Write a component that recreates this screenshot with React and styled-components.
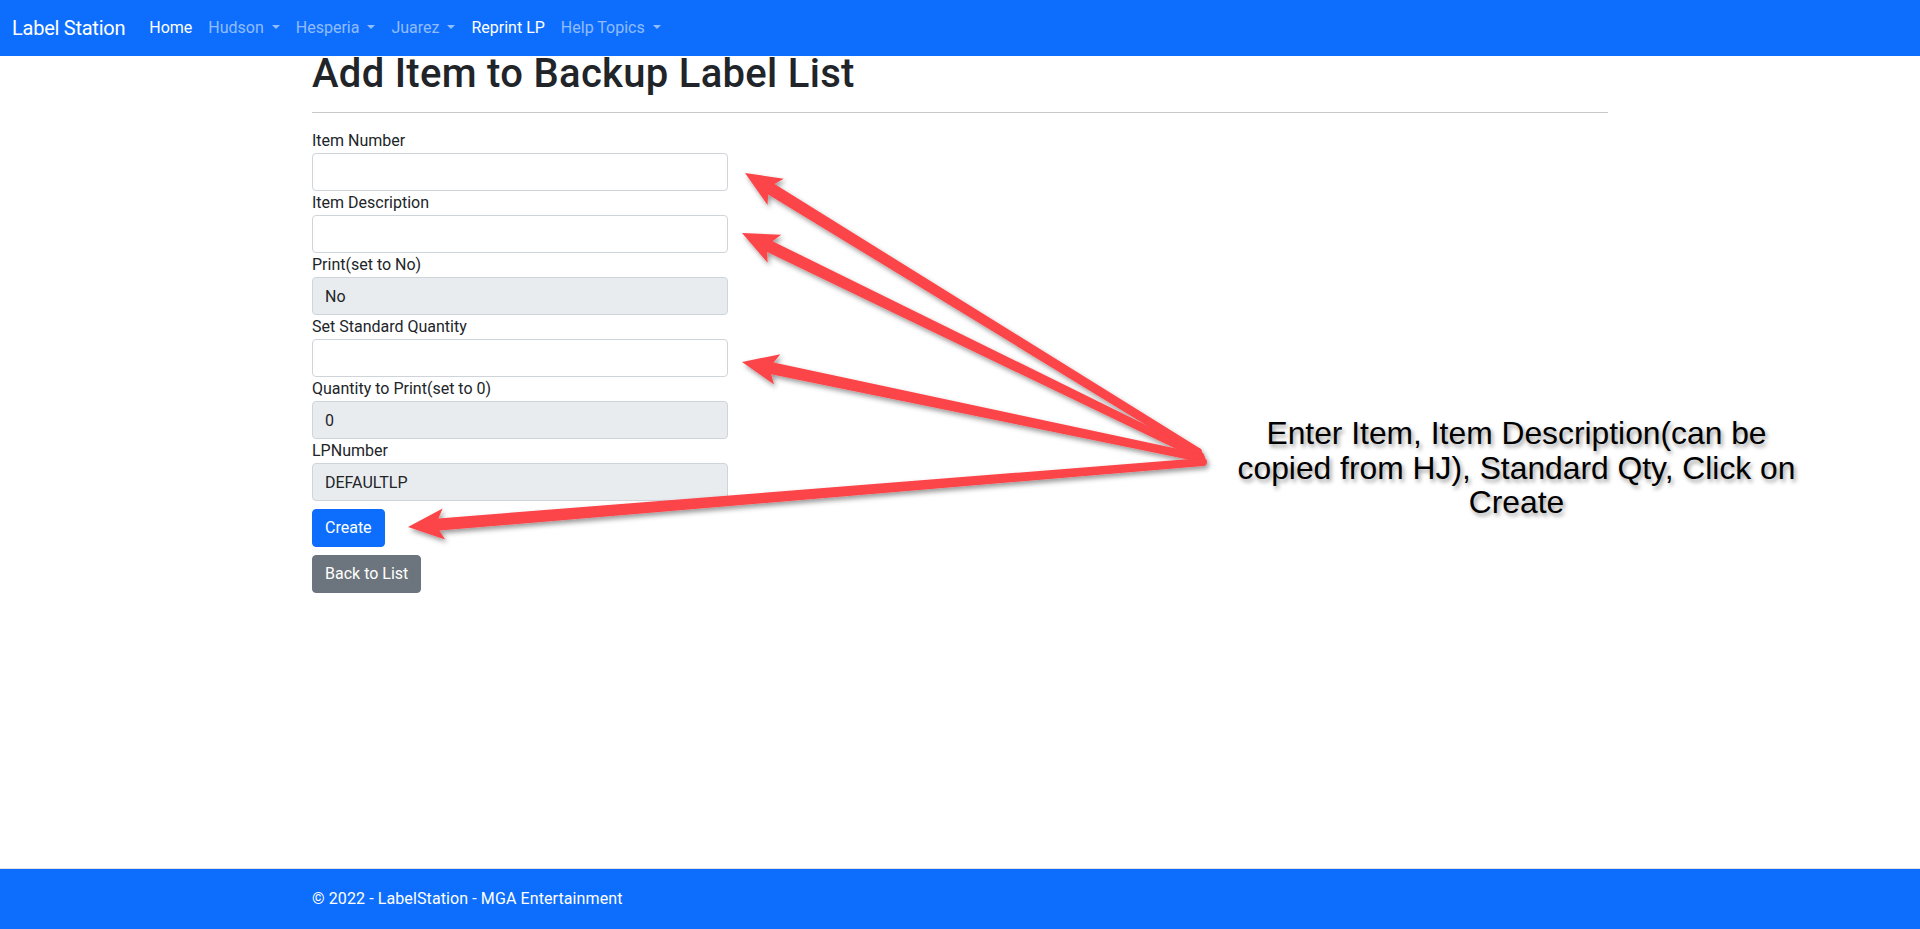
import React from "react";
import styled, { createGlobalStyle } from "styled-components";

const GlobalStyle = createGlobalStyle`
  *, *::before, *::after { box-sizing: border-box; }
  html, body { margin: 0; padding: 0; }
  body {
    font-family: "Segoe UI", Roboto, "Helvetica Neue", Arial, sans-serif;
    font-size: 16px;
    line-height: 1.5;
    color: #212529;
    background: #fff;
  }
`;

const Page = styled.div`
  position: relative;
  min-height: 100vh;
  display: flex;
  flex-direction: column;
`;

const NavBar = styled.nav`
  height: 56px;
  background: #0d6efd;
  display: flex;
  align-items: center;
  padding: 8px 12px;
`;

const Brand = styled.a`
  font-size: 20px;
  line-height: 30px;
  letter-spacing: -0.25px;
  padding: 5px 0;
  margin-right: 16px;
  color: #fff;
  text-decoration: none;
  white-space: nowrap;
`;

const NavList = styled.ul`
  display: flex;
  list-style: none;
  margin: 0;
  padding: 0;
`;

const NavLink = styled.a`
  display: block;
  padding: 8px;
  line-height: 24px;
  font-size: 16px;
  color: ${(p) => (p.$muted ? "rgba(255,255,255,0.55)" : "#fff")};
  text-decoration: none;
  white-space: nowrap;
`;

const Caret = styled.span`
  display: inline-block;
  margin-left: 8px;
  vertical-align: 0.255em;
  border-top: 0.3em solid;
  border-right: 0.3em solid transparent;
  border-left: 0.3em solid transparent;
  border-bottom: 0;
`;

const Main = styled.main`
  width: 100%;
  max-width: 1320px;
  margin: 0 auto;
  padding: 0 12px;
`;

const Title = styled.h1`
  margin: -6px 0 0;
  font-size: 40px;
  font-weight: 500;
  line-height: 1.2;
  letter-spacing: 0.3px;
`;

const Rule = styled.hr`
  margin: 14px 0 16px;
  border: 0;
  border-top: 1px solid #000;
  opacity: 0.22;
`;

const FormColumn = styled.form`
  width: 416px;
  display: flex;
  flex-direction: column;
`;

const Label = styled.label`
  display: block;
  font-size: 16px;
  line-height: 24px;
`;

const Input = styled.input`
  display: block;
  width: 100%;
  height: 38px;
  padding: 6px 12px;
  font: inherit;
  font-size: 16px;
  line-height: 24px;
  color: #212529;
  background: ${(p) => (p.readOnly ? "#e9ecef" : "#fff")};
  border: 1px solid #ced4da;
  border-radius: 4px;
  outline: none;
`;

const Actions = styled.div`
  margin-top: 8px;
  display: flex;
  flex-direction: column;
  align-items: flex-start;
  gap: 8px;
`;

const Button = styled.button`
  font: inherit;
  font-size: 16px;
  line-height: 24px;
  padding: 6px 12px;
  border: 1px solid ${(p) => (p.$variant === "secondary" ? "#6c757d" : "#0d6efd")};
  background: ${(p) => (p.$variant === "secondary" ? "#6c757d" : "#0d6efd")};
  color: #fff;
  border-radius: 4px;
  cursor: pointer;
`;

const Footer = styled.footer`
  margin-top: auto;
  border-top: 1px solid #dee2e6;
  background: #0d6efd;
  height: 61px;
  line-height: 60px;
  color: #fff;
  font-size: 16px;
  letter-spacing: 0.1px;
`;

const FooterInner = styled.div`
  max-width: 1320px;
  margin: 0 auto;
  padding: 0 12px;
`;

const Overlay = styled.svg`
  position: absolute;
  top: 0;
  left: 0;
  pointer-events: none;
`;

const Callout = styled.p`
  position: absolute;
  left: 1224px;
  top: 416px;
  width: 585px;
  margin: 0;
  font-family: "Liberation Sans", Arial, sans-serif;
  font-size: 31.8px;
  line-height: 34.5px;
  text-align: center;
  color: #000;
  text-shadow: 2px 3px 4px rgba(0, 0, 0, 0.4);
`;

const navItems = [
  { label: "Home" },
  { label: "Hudson", muted: true, dropdown: true },
  { label: "Hesperia", muted: true, dropdown: true },
  { label: "Juarez", muted: true, dropdown: true },
  { label: "Reprint LP" },
  { label: "Help Topics", muted: true, dropdown: true },
];

const fields = [
  { label: "Item Number", value: "" },
  { label: "Item Description", value: "" },
  { label: "Print(set to No)", value: "No", readOnly: true },
  { label: "Set Standard Quantity", value: "" },
  { label: "Quantity to Print(set to 0)", value: "0", readOnly: true },
  { label: "LPNumber", value: "DEFAULTLP", readOnly: true },
];

function arrowPoints(tail, tip, head = 31, half = 15.5, barb = 5, w0 = 4, w1 = 6) {
  const dx = tail[0] - tip[0];
  const dy = tail[1] - tip[1];
  const len = Math.hypot(dx, dy);
  const ux = dx / len;
  const uy = dy / len;
  const px = -uy;
  const py = ux;
  const bx = tip[0] + ux * head;
  const by = tip[1] + uy * head;
  const pts = [
    [tip[0], tip[1]],
    [bx + px * half + ux * barb, by + py * half + uy * barb],
    [bx + px * w1, by + py * w1],
    [tail[0] + px * w0, tail[1] + py * w0],
    [tail[0] - px * w0, tail[1] - py * w0],
    [bx - px * w1, by - py * w1],
    [bx - px * half + ux * barb, by - py * half + uy * barb],
  ];
  return pts.map((p) => p.map((v) => v.toFixed(1)).join(",")).join(" ");
}

const arrows = [
  { tail: [1198, 452], tip: [745, 173] },
  { tail: [1200, 456], tip: [742, 233] },
  { tail: [1201, 458], tip: [742, 362] },
  { tail: [1203, 462], tip: [408, 527] },
];

export default function App() {
  return (
    <Page>
      <GlobalStyle />
      <NavBar>
        <Brand href="#">Label Station</Brand>
        <NavList>
          {navItems.map((n) => (
            <li key={n.label}>
              <NavLink href="#" $muted={n.muted}>
                {n.label}
                {n.dropdown && <Caret />}
              </NavLink>
            </li>
          ))}
        </NavList>
      </NavBar>
      <Main>
        <Title>Add Item to Backup Label List</Title>
        <Rule />
        <FormColumn onSubmit={(e) => e.preventDefault()}>
          {fields.map((f) => (
            <div key={f.label}>
              <Label>{f.label}</Label>
              <Input defaultValue={f.value} readOnly={f.readOnly} />
            </div>
          ))}
          <Actions>
            <Button type="submit">Create</Button>
            <Button type="button" $variant="secondary">Back to List</Button>
          </Actions>
        </FormColumn>
      </Main>
      <Footer>
        <FooterInner>© 2022 - LabelStation - MGA Entertainment</FooterInner>
      </Footer>
      <Overlay width="1920" height="929" viewBox="0 0 1920 929">
        <defs>
          <filter id="arrowShadow" x="-10%" y="-10%" width="130%" height="130%">
            <feDropShadow dx="2" dy="3" stdDeviation="2.5" floodColor="#000" floodOpacity="0.4" />
          </filter>
        </defs>
        <g fill="#fc4449" filter="url(#arrowShadow)">
          {arrows.map((a, i) => (
            <g key={i}>
              <polygon points={arrowPoints(a.tail, a.tip)} />
              <circle cx={a.tail[0]} cy={a.tail[1]} r="4" />
            </g>
          ))}
        </g>
      </Overlay>
      <Callout>
        Enter Item, Item Description(can be copied from HJ), Standard Qty, Click on Create
      </Callout>
    </Page>
  );
}
